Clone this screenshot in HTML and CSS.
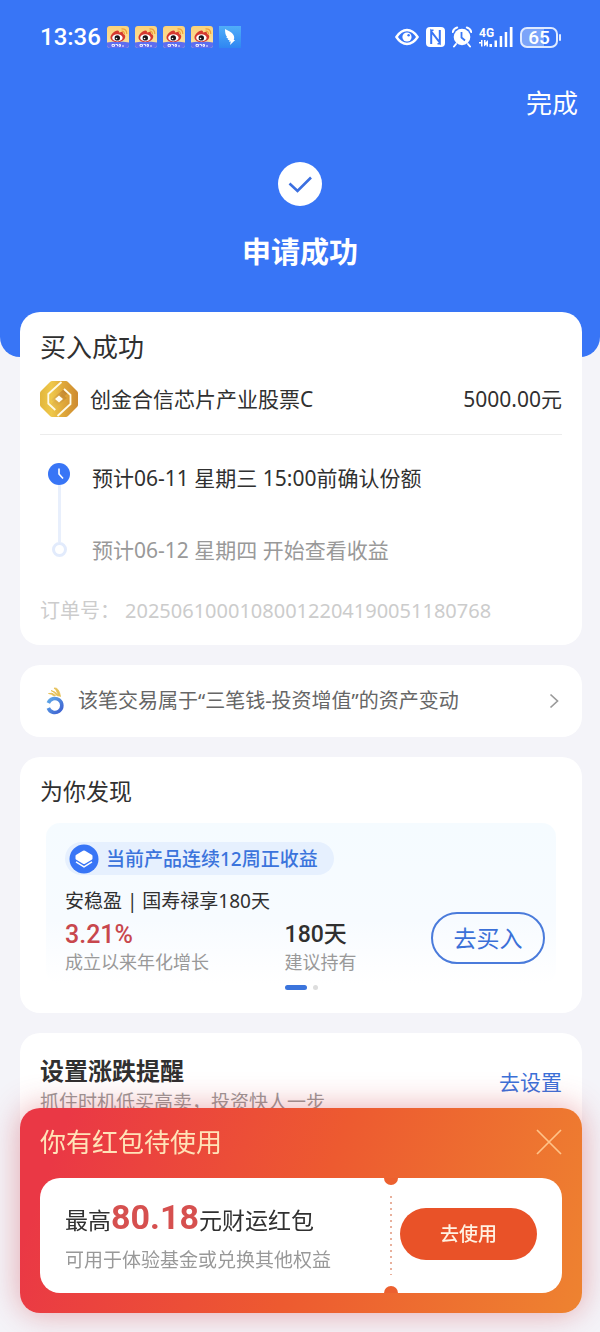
FILE: index.html
```html
<!DOCTYPE html>
<html lang="zh-CN">
<head>
<meta charset="utf-8">
<meta name="viewport" content="width=device-width, initial-scale=1">
<title>申请成功</title>
<link rel="stylesheet" href="styles.css">
</head>
<body>
<svg class="defs" width="0" height="0" aria-hidden="true">
  <defs>
    <linearGradient id="gold" x1="0" y1="0" x2="1" y2="0"><stop offset="0" stop-color="#e2b63c"/><stop offset=".3" stop-color="#efc84a"/><stop offset=".6" stop-color="#e0a93a"/><stop offset="1" stop-color="#cd8a30"/></linearGradient>
    <linearGradient id="band" x1="0" y1="1" x2="1" y2="0"><stop offset="0" stop-color="#efcb55"/><stop offset="1" stop-color="#bd7a28"/></linearGradient>
    <linearGradient id="cream" x1="0" y1="0" x2="0" y2="1"><stop offset="0" stop-color="#fbd27a"/><stop offset="1" stop-color="#fbe3a4"/></linearGradient>
    <linearGradient id="ring" x1="0" y1="0" x2="1" y2="1"><stop offset="0" stop-color="#5fa9e8"/><stop offset="1" stop-color="#3d5fd0"/></linearGradient>
    <linearGradient id="sky" x1="0" y1="0" x2="0" y2="1"><stop offset="0" stop-color="#50aef8"/><stop offset="1" stop-color="#2f86f2"/></linearGradient>
    <symbol id="weibo" viewBox="0 0 22 22">
      <rect width="22" height="22" rx="3" fill="url(#cream)"/>
      <path d="M0 16.500q11-2 22 0V19a3 3 0 0 1-3 3H3a3 3 0 0 1-3-3z" fill="#5d6df0"/>
      <path d="M3.500 11.500c0-3 4-7 7-7 1.500 0 1.700 1 1.400 2 2-.9 4.800-.8 4.300 1.500 1.700.5 2.200 1.500 2 3-.5 3.200-4 5-7.800 5-4.200 0-6.900-1.800-6.900-4.500z" fill="#d5392f"/>
      <ellipse cx="10.400" cy="11.800" rx="5.200" ry="3.600" fill="#fff"/>
      <circle cx="10.300" cy="11.900" r="2.700" fill="#1b1518"/>
      <circle cx="9.500" cy="12.500" r=".8" fill="#fff"/>
      <path d="M14.500 5.200q3-.2 3 3M14.500 2.900q5.300-.2 5.300 5" fill="none" stroke="#eda13c" stroke-width="1.200"/>
      <path d="M5 18.500h2.500v1.800H5zM8.500 18.500h2v1.800M12 18.500h1.500v1.800H12zM15 20h2" fill="none" stroke="#fff" stroke-width=".9"/>
    </symbol>
  </defs>
</svg>

<header class="hero">
  <div class="status">
    <div class="status-side">
      <span class="clock">13:36</span>
      <svg class="app"><use href="#weibo"/></svg>
      <svg class="app"><use href="#weibo"/></svg>
      <svg class="app"><use href="#weibo"/></svg>
      <svg class="app"><use href="#weibo"/></svg>
      <svg class="app" viewBox="0 0 22 22"><rect width="22" height="22" fill="url(#sky)"/><path d="M6 3c3 1.500 7 3 8.500 6 1 2 .8 3.600.2 5h1.500L11 19l.8-3.500-1.800.2.600-1.500-2-.4.800-1-2.300-1.200 1-.6C6.500 9.500 6 6.500 6 3z" fill="#fff"/></svg>
    </div>
    <div class="status-side status-right">
      <svg width="24" height="20" viewBox="0 0 24 20" fill="none" stroke="#fff" stroke-width="2.400"><path d="M1.400 10Q6 3 12 3T22.600 10Q18 17 12 17T1.400 10z"/><circle cx="12" cy="10" r="4.600" fill="#fff" stroke="none"/><circle cx="13.600" cy="8.200" r="1.200" fill="#3875f6" stroke="none"/></svg>
      <svg width="19" height="20" viewBox="0 0 19 20"><rect width="19" height="20" rx="4" fill="#fff"/><path d="M5.200 17V4.500l8.600 11V3" fill="none" stroke="#3875f6" stroke-width="2"/><path d="M5 3.200h2.500M11.500 16.800H14" stroke="#3875f6" stroke-width="1.400"/></svg>
      <svg width="20" height="22" viewBox="0 0 20 22"><circle cx="10" cy="11" r="8.300" fill="#fff"/><path d="M.8 6Q1.500 2.500 5.200 1.500M19.200 6Q18.500 2.500 14.800 1.500M4 18l-2 2.500M16 18l2 2.500" fill="none" stroke="#fff" stroke-width="2" stroke-linecap="round"/><path d="M9.500 6v5.500l3.500 3" fill="none" stroke="#3875f6" stroke-width="1.800"/></svg>
      <svg width="34" height="22" viewBox="0 0 34 22" fill="#fff"><text class="net" x="0" y="11">4G</text><path d="M0 16h2v-2h1.500v6.500H2V17.500H0zM5 14h1.500v2.500L9 14v6.500H7.500v-2L5 20.500zM10.500 18h2.500v3h-2.500zM15.500 14.500H18V21h-2.500zM20.700 10h2.500v11h-2.500zM25.700 6h2.500v15h-2.500zM30.800 1h2.700v20h-2.700z"/></svg>
      <span class="battery">65</span>
    </div>
  </div>
  <button class="done" type="button">完成</button>
  <svg class="check" viewBox="0 0 44 44"><circle cx="22" cy="22" r="22" fill="#fff"/><path d="M11.500 21.500l8 7.500L33 15.500" fill="none" stroke="#3b6fe0" stroke-width="2.600"/></svg>
  <h1>申请成功</h1>
</header>

<main>
  <section class="card order">
    <h2>买入成功</h2>
    <div class="fund">
      <svg width="38" height="36" viewBox="0 0 38 36">
        <path d="M10 1Q11 0 12 0h14q1 0 2 1l9 9q1 1 1 2v12q0 1-1 2l-9 9q-1 1-2 1H12q-1 0-2-1l-9-9q-1-1-1-2V12q0-1 1-2z" fill="url(#gold)"/>
        <path d="M11 19L23.500 8.500l4 4L16 23z" fill="url(#band)"/>
        <path d="M27 17L14.500 27.500l-4-4L22 13z" fill="url(#band)" opacity=".75"/>
        <path d="M21.500 1L8.300 13v9.500l7 6.500M17.500 35l13-12v-9l-6.500-6" fill="none" stroke="#fffbe8" stroke-width="1.800"/>
        <path d="M19 14.500l4 3.500-4 3.500-4-3.500z" fill="#fffdf2"/>
      </svg>
      <span class="fund-name">创金合信芯片产业股票C</span>
      <span>5000.00元</span>
    </div>
    <div class="steps">
      <div class="rail">
        <svg width="22" height="22" viewBox="0 0 22 22"><circle cx="11" cy="11" r="11" fill="#3875f6"/><path d="M11 5.500V11l4 4.500" fill="none" stroke="#fff" stroke-width="1.600"/></svg>
        <i class="rail-line"></i>
        <i class="rail-end"></i>
      </div>
      <ol>
        <li>预计06-11 星期三 15:00前确认份额</li>
        <li class="pending">预计06-12 星期四 开始查看收益</li>
      </ol>
    </div>
    <p class="number"><span>订单号：</span><span>20250610001080012204190051180768</span></p>
  </section>

  <a class="card notice" href="#">
    <svg width="18" height="28" viewBox="0 0 18 28"><path d="M2.500 6.500Q6 5 9.500 8.500L8 9Q5.500 6.700 2.500 6.500zM5 3.500q4 .2 7.500 5.500l-2-.7Q8.500 5 5 3.500zM8 1q5-.8 6.500 8.500L12 8.500Q11 3 8 1z" fill="#e4bf55" stroke="#e4bf55" stroke-width=".8"/><path d="M2.300 16A7 7 0 1 1 2.300 21" fill="none" stroke="url(#ring)" stroke-width="3.600"/></svg>
    <span class="notice-text">该笔交易属于“三笔钱-投资增值”的资产变动</span>
    <svg width="10" height="16" viewBox="0 0 10 16"><path d="M1.500 1.500L8.500 8l-7 6.500" fill="none" stroke="#9a9a9a" stroke-width="1.700"/></svg>
  </a>

  <section class="card discover">
    <h2>为你发现</h2>
    <div class="product">
      <div class="tag">
        <svg width="30" height="30" viewBox="0 0 30 30"><circle cx="15" cy="15" r="14.500" fill="#3875f6"/><path d="M14 6.800q1-.6 2 0l6.700 4q.8.500.8 1.200v2.500q0 .8-.8 1.200L16 19.700q-1 .6-2 0l-6.700-4q-.8-.4-.8-1.200V12q0-.7.8-1.200z" fill="#fff"/><path d="M7 17.800l8 5 8-5" fill="none" stroke="#fff" stroke-width="1.500"/></svg>
        <span>当前产品连续12周正收益</span>
      </div>
      <div class="product-body">
        <div class="product-info">
          <h3>安稳盈 | 国寿禄享180天</h3>
          <dl class="stats">
            <div><dd class="rate">3.21%</dd><dt>成立以来年化增长</dt></div>
            <div><dd>180天</dd><dt>建议持有</dt></div>
          </dl>
        </div>
        <button class="buy" type="button">去买入</button>
      </div>
    </div>
    <div class="dots"><i class="on"></i><i></i></div>
  </section>

  <section class="card alert">
    <div>
      <h2>设置涨跌提醒</h2>
      <p>抓住时机低买高卖，投资快人一步</p>
    </div>
    <a href="#">去设置</a>
  </section>
</main>

<aside class="coupon">
  <div class="coupon-head">
    <h2>你有红包待使用</h2>
    <button class="close" type="button" aria-label="关闭"><svg width="26" height="26" viewBox="0 0 26 26"><path d="M1 1l24 24M25 1L1 25" stroke="#ffc389" stroke-width="1.700"/></svg></button>
  </div>
  <div class="ticket">
    <div class="ticket-text">
      <p class="amount">最高<strong>80.18</strong>元财运红包</p>
      <p class="usage">可用于体验基金或兑换其他权益</p>
    </div>
    <div class="tear"></div>
    <button class="use" type="button">去使用</button>
  </div>
</aside>
</body>
</html>
```

FILE: styles.css
```css
* {
  box-sizing: border-box;
}

body {
  margin: 0;
  min-height: 100vh;
  background: #f4f4f9;
  color: #303030;
  font-family: "Noto Sans", "Noto Sans CJK SC", sans-serif;
  font-size: 21px;
  line-height: 30px;
}

h1, h2, h3, p, ol, dl, dd {
  margin: 0;
  padding: 0;
}

h2, h3 {
  font-weight: 400;
}

svg {
  display: block;
  flex: none;
}

a {
  color: inherit;
  text-decoration: none;
}

button {
  padding: 0;
  border: 0;
  background: none;
  color: inherit;
  font: inherit;
  cursor: pointer;
}

.defs {
  position: absolute;
}

/* Header */
.hero {
  display: flex;
  flex-direction: column;
  align-items: center;
  padding: 22px 22px 84px;
  border-radius: 0 0 20px 20px;
  background: #3875f6;
  color: #fff;
}

.status {
  display: flex;
  justify-content: space-between;
  align-self: stretch;
  padding: 0 16px 0 18px;
}

.status-side {
  display: flex;
  align-items: center;
  gap: 6px;
}

.status-right {
  gap: 7px;
}

.clock {
  font: 500 24px/30px Roboto, sans-serif;
}

.app {
  width: 22px;
  height: 22px;
}

.net {
  font: 700 12px Roboto, sans-serif;
}

.battery {
  position: relative;
  width: 38px;
  height: 21px;
  margin-right: 4px;
  border: 2px solid #dfeaff;
  border-radius: 7px;
  background: linear-gradient(90deg, #7ba4f9 65%, #3875f6 65%);
  font: 500 19px/17px Roboto, sans-serif;
  text-align: center;
}

.battery::after {
  content: "";
  position: absolute;
  top: 5px;
  right: -5px;
  width: 2px;
  height: 7px;
  border-radius: 1px;
  background: #dfeaff;
}

.done {
  align-self: flex-end;
  margin-top: 32px;
  font-size: 26px;
  line-height: 38px;
}

.check {
  width: 44px;
  height: 44px;
  margin-top: 40px;
}

h1 {
  margin-top: 25px;
  font-size: 29px;
  font-weight: 700;
  line-height: 42px;
}

/* Cards */
main {
  display: flex;
  flex-direction: column;
  gap: 20px;
  margin-top: -45px;
  padding: 0 18px 20px 20px;
}

.card {
  padding: 17px 20px;
  border-radius: 20px;
  background: #fff;
}

.order h2 {
  font-size: 26px;
  line-height: 36px;
}

.fund {
  display: flex;
  align-items: center;
  margin-top: 16px;
  padding-bottom: 17px;
  border-bottom: 1px solid #ececec;
  line-height: 34px;
}

.fund-name {
  flex: 1;
  margin-left: 12px;
}

.steps {
  display: flex;
  gap: 14px;
  margin-top: 28px;
}

.rail {
  display: flex;
  flex-direction: column;
  align-items: center;
  width: 38px;
  padding-bottom: 8px;
}

.rail-line {
  flex: 1;
  width: 3px;
  background: #e8effc;
}

.rail-end {
  width: 15px;
  height: 15px;
  border: 3px solid #e2ebfc;
  border-radius: 50%;
}

.steps ol {
  display: flex;
  flex-direction: column;
  gap: 42px;
  list-style: none;
}

.pending {
  color: #999;
}

.number {
  display: flex;
  gap: 5px;
  margin: 31px 0 2px;
  color: #ccc;
  font-size: 20px;
}

.notice {
  display: flex;
  align-items: center;
  gap: 14px;
  min-height: 72px;
  padding: 0 23px 0 26px;
  color: #666;
  font-size: 20px;
}

.notice-text {
  flex: 1;
}

.discover {
  padding-bottom: 16px;
}

.discover h2 {
  font-size: 23px;
  line-height: 34px;
}

.product {
  margin: 15px 6px 0;
  padding: 19px 11px 10px 19px;
  border-radius: 14px;
  background: linear-gradient(#f5fbff, #f7fbff 60%, #fff);
}

.tag {
  display: inline-flex;
  align-items: center;
  gap: 7px;
  height: 33px;
  padding: 0 16px 0 4px;
  border-radius: 17px;
  background: #e6f0fe;
  color: #3b74dc;
  font-size: 19px;
  font-weight: 500;
  vertical-align: top;
}

.product-body {
  display: flex;
  align-items: flex-end;
  margin-top: 12px;
}

.product-info {
  flex: 1;
}

.product h3 {
  margin-bottom: 5px;
  font-size: 19px;
  line-height: 28px;
}

.stats {
  display: grid;
  grid-template-columns: 3fr 2fr;
}

.stats div {
  display: flex;
  flex-direction: column;
}

.stats dd {
  font: 500 23px/30px Roboto, "Noto Sans CJK SC", sans-serif;
}

.stats .rate {
  color: #c8474d;
  font-size: 25px;
}

.stats dt {
  color: #999;
  font-size: 18px;
  line-height: 24px;
}

.buy {
  width: 114px;
  height: 52px;
  margin-bottom: 10px;
  border: 2px solid #4a7bdb;
  border-radius: 26px;
  color: #3b70d8;
  font-size: 23px;
}

.dots {
  display: flex;
  justify-content: center;
  gap: 6px;
  padding: 1px 0 7px;
}

.dots i {
  width: 5px;
  height: 5px;
  border-radius: 3px;
  background: #ddd;
}

.dots .on {
  width: 22px;
  background: #3b74dc;
}

.alert {
  display: flex;
  align-items: flex-start;
  justify-content: space-between;
  padding: 21px 20px;
}

.alert h2 {
  font-size: 24px;
  font-weight: 700;
  line-height: 34px;
}

.alert p {
  color: #999;
  font-size: 19px;
  line-height: 28px;
}

.alert a {
  padding-top: 13px;
  color: #3b70d8;
}

/* Coupon panel pinned to the bottom of the window */
.coupon {
  position: fixed;
  right: 18px;
  bottom: 19px;
  left: 20px;
  padding: 16px 20px 20px;
  border-radius: 20px;
  background: linear-gradient(110deg, #ea3845 8%, #ed5a30 52%, #ee8330);
  box-shadow: 0 0 32px rgba(205, 50, 60, .42);
}

.coupon-head {
  display: flex;
  align-items: center;
  justify-content: space-between;
  margin-bottom: 18px;
}

.coupon h2 {
  color: #ffe3b8;
  font-size: 26px;
  line-height: 36px;
}

.ticket {
  display: flex;
  align-items: center;
  min-height: 115px;
  padding: 0 25px;
  border-radius: 20px;
  background: #fff;
}

.ticket-text {
  flex: 1;
}

.amount {
  font-size: 23px;
  line-height: 44px;
}

.amount strong {
  color: #d6504f;
  font-family: Roboto, sans-serif;
  font-size: 34px;
  font-weight: 700;
}

.usage {
  margin-top: 2px;
  color: #999;
  font-size: 19px;
  line-height: 32px;
}

.tear {
  position: relative;
  align-self: stretch;
  width: 2px;
  margin: 18px 8px 18px 0;
  background: repeating-linear-gradient(#e8b09c 0 2px, #fff 2px 6px);
}

.tear::before,
.tear::after {
  content: "";
  position: absolute;
  left: -6px;
  width: 14px;
  height: 7px;
  background: #ec602f;
}

.tear::before {
  top: -18px;
  border-radius: 0 0 7px 7px;
}

.tear::after {
  bottom: -18px;
  border-radius: 7px 7px 0 0;
}

.use {
  width: 137px;
  height: 52px;
  margin-bottom: 4px;
  border-radius: 26px;
  background: #e95228;
  color: #fff2e2;
  font-size: 19px;
  font-weight: 500;
}
```
